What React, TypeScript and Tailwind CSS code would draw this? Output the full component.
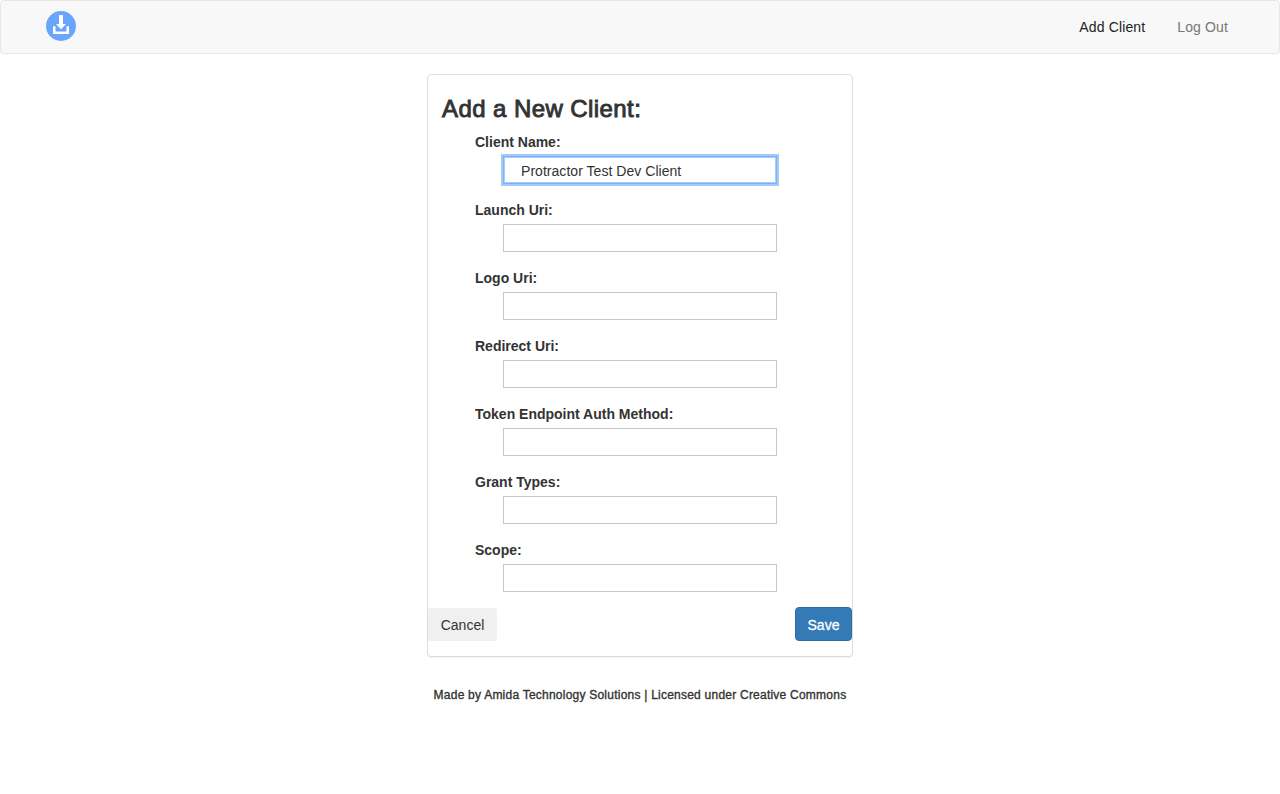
const fields = [
  { label: "Client Name:", value: "Protractor Test Dev Client" },
  { label: "Launch Uri:", value: "" },
  { label: "Logo Uri:", value: "" },
  { label: "Redirect Uri:", value: "" },
  { label: "Token Endpoint Auth Method:", value: "" },
  { label: "Grant Types:", value: "" },
  { label: "Scope:", value: "" },
];

function Logo() {
  return (
    <svg className="size-[30px]" viewBox="0 0 30 30" aria-hidden="true">
      <circle cx="15" cy="15" r="15" fill="#6aa5fd" />
      <path d="M7 15.200h2.500V20.400h11V15.200H23V23H7z" fill="#fff" />
      <path d="M13 4h4v9h3L15 18.200 10 13h3z" fill="#fff" />
    </svg>
  );
}

function Field({ label, value }: { label: string; value: string }) {
  const ring = value
    ? "border-[#7fb2ee] shadow-[0_0_0_2px_#9dcbfb,inset_0_0_0_1px_#a5cdfa]"
    : "border-[#c8c8c8]";
  return (
    <div className="mb-4 h-[52px]">
      <label className="block pl-[47px] text-sm leading-5 font-bold">{label}</label>
      <input
        defaultValue={value}
        className={`mt-1 ml-[75px] block h-7 w-[274px] border bg-white px-[17px] pt-[2px] text-sm tracking-[0.04px] outline-none ${ring}`}
      />
    </div>
  );
}

export default function App() {
  return (
    <div className="min-h-[794px] bg-white font-['Liberation_Sans',Arial,sans-serif] text-sm text-[#333]">
      <nav className="flex h-[54px] items-start justify-between rounded border border-[#e7e7e7] bg-[#f8f8f8] pr-[51px] pl-[45px]">
        <a className="pt-[10px]">
          <Logo />
        </a>
        <div className="flex gap-8 pt-4 leading-5">
          <a className="tracking-[0.13px] text-[#222]">Add Client</a>
          <a className="tracking-[0.13px] text-[#777]">Log Out</a>
        </div>
      </nav>
      <main className="mx-auto mt-5 h-[583px] w-[426px] rounded border border-[#ddd] bg-white pt-5 shadow-[0_1px_1px_rgba(0,0,0,0.05)]">
        <h3 className="mb-[10px] pl-[14px] text-2xl leading-[27px] font-normal tracking-[0.42px] [-webkit-text-stroke:0.9px_#333]">
          Add a New Client:
        </h3>
        {fields.map((f) => (
          <Field key={f.label} {...f} />
        ))}
        <div className="-mt-px flex items-center justify-between">
          <button className="h-[33px] w-[69px] rounded-[3px] bg-[#f0f0f0] pt-px">Cancel</button>
          <button className="h-[34px] w-[57px] rounded border border-[#2e6da4] bg-[#337ab7] pt-px text-white [-webkit-text-stroke:0.3px_#fff]">
            Save
          </button>
        </div>
      </main>
      <footer className="mt-[30px] text-center text-xs leading-[17px] tracking-[0.23px] text-[#333] [-webkit-text-stroke:0.35px_#333]">
        Made by Amida Technology Solutions | Licensed under Creative Commons
      </footer>
    </div>
  );
}
